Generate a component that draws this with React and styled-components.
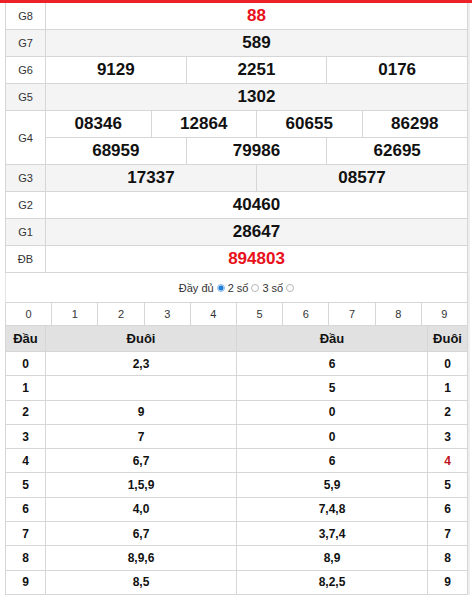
import React from 'react';
import styled, { createGlobalStyle } from 'styled-components';

const GlobalStyle = createGlobalStyle`
  body {
    margin: 0;
    background: #fff;
    font-family: "Liberation Sans", Arial, sans-serif;
  }
`;

const Page = styled.div`
  width: 472px;
`;

const RedBar = styled.div`
  height: 3px;
  background: #ec2229;
`;

const Body = styled.div`
  margin: 0 4px 0 5px;
  box-shadow: 2px 0 0 #eee;
`;

const Results = styled.div`
  display: grid;
  grid-template-columns: 39px repeat(12, 1fr);
  grid-auto-rows: 26px;
  gap: 1px;
  padding: 0 1px 1px;
  background: #d6d6d6;
`;

const Cell = styled.div`
  grid-column: span ${(p) => p.$span || 1};
  grid-row: span ${(p) => p.$rows || 1};
  display: flex;
  align-items: center;
  justify-content: center;
  background: ${(p) => (p.$shade ? '#f4f4f4' : '#fff')};
`;

const Label = styled(Cell)`
  font-size: 11px;
  color: #333;
`;

const Prize = styled(Cell)`
  font-size: 17px;
  font-weight: bold;
  color: ${(p) => (p.$red ? '#e8101a' : '#111')};
`;

const Options = styled.div`
  height: 29px;
  display: flex;
  align-items: center;
  justify-content: center;
  gap: 3px;
  font-size: 11px;
  color: #333;
  border-left: 1px solid #e4e4e4;
  border-right: 1px solid #d6d6d6;
`;

const Radio = styled.span`
  display: inline-block;
  box-sizing: border-box;
  width: 8px;
  height: 8px;
  border-radius: 50%;
  border: 1px solid ${(p) => (p.$on ? '#8db8e6' : '#b5b5b5')};
  background: ${(p) => (p.$on ? 'radial-gradient(circle, #1f7fd8 0 2.3px, #dcebfa 2.7px)' : '#fff')};
`;

const Digits = styled.div`
  display: grid;
  grid-template-columns: repeat(10, 1fr);
  grid-auto-rows: 22px;
  gap: 1px;
  padding: 1px 1px 0;
  background: #d6d6d6;
`;

const Digit = styled.div`
  display: flex;
  align-items: center;
  justify-content: center;
  background: #fff;
  font-size: 11px;
  color: #333;
`;

const Loto = styled.div`
  display: grid;
  grid-template-columns: 39px 1fr 1fr 39px;
  grid-template-rows: 25px;
  grid-auto-rows: 23.3px;
  gap: 1px;
  padding: 1px;
  background: #d6d6d6;
`;

const Head = styled.div`
  display: flex;
  align-items: center;
  justify-content: center;
  background: #e1e1e1;
  font-size: 13px;
  font-weight: bold;
  color: #111;
`;

const Val = styled.div`
  display: flex;
  align-items: center;
  justify-content: center;
  background: #fff;
  font-size: 12px;
  font-weight: bold;
  color: ${(p) => (p.$red ? '#c0121a' : '#111')};
`;

const prizes = [
  { label: 'G8', rows: [[{ v: '88', s: 12, red: true }]] },
  { label: 'G7', rows: [[{ v: '589', s: 12 }]] },
  { label: 'G6', rows: [[{ v: '9129', s: 4 }, { v: '2251', s: 4 }, { v: '0176', s: 4 }]] },
  { label: 'G5', rows: [[{ v: '1302', s: 12 }]] },
  {
    label: 'G4',
    rows: [
      [{ v: '08346', s: 3 }, { v: '12864', s: 3 }, { v: '60655', s: 3 }, { v: '86298', s: 3 }],
      [{ v: '68959', s: 4 }, { v: '79986', s: 4 }, { v: '62695', s: 4 }],
    ],
  },
  { label: 'G3', rows: [[{ v: '17337', s: 6 }, { v: '08577', s: 6 }]] },
  { label: 'G2', rows: [[{ v: '40460', s: 12 }]] },
  { label: 'G1', rows: [[{ v: '28647', s: 12 }]] },
  { label: 'ĐB', rows: [[{ v: '894803', s: 12, red: true }]] },
];

const loto = [
  ['0', '2,3', '6', '0'],
  ['1', '', '5', '1'],
  ['2', '9', '0', '2'],
  ['3', '7', '0', '3'],
  ['4', '6,7', '6', '4'],
  ['5', '1,5,9', '5,9', '5'],
  ['6', '4,0', '7,4,8', '6'],
  ['7', '6,7', '3,7,4', '7'],
  ['8', '8,9,6', '8,9', '8'],
  ['9', '8,5', '8,2,5', '9'],
];

export default function App() {
  return (
    <Page>
      <GlobalStyle />
      <RedBar />
      <Body>
        <Results>
          {prizes.map((p, i) => {
            const shade = i % 2 === 1;
            return (
              <React.Fragment key={p.label}>
                <Label $rows={p.rows.length} $shade={shade}>{p.label}</Label>
                {p.rows.flat().map((c, j) => (
                  <Prize key={j} $span={c.s} $shade={shade} $red={c.red}>{c.v}</Prize>
                ))}
              </React.Fragment>
            );
          })}
        </Results>
        <Options>
          Đầy đủ <Radio $on /> 2 số <Radio /> 3 số <Radio />
        </Options>
        <Digits>
          {Array.from({ length: 10 }, (_, i) => (
            <Digit key={i}>{i}</Digit>
          ))}
        </Digits>
        <Loto>
          <Head>Đầu</Head>
          <Head>Đuôi</Head>
          <Head>Đầu</Head>
          <Head>Đuôi</Head>
          {loto.map((r) => (
            <React.Fragment key={r[0]}>
              <Val>{r[0]}</Val>
              <Val>{r[1]}</Val>
              <Val>{r[2]}</Val>
              <Val $red={r[3] === '4'}>{r[3]}</Val>
            </React.Fragment>
          ))}
        </Loto>
      </Body>
    </Page>
  );
}
